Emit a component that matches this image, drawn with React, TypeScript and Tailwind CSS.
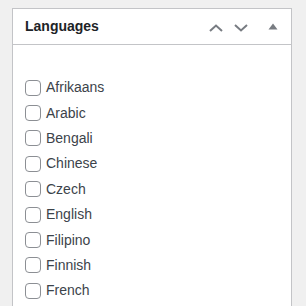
import React from 'react';

const languages = ['Afrikaans', 'Arabic', 'Bengali', 'Chinese', 'Czech', 'English', 'Filipino', 'Finnish', 'French'];

const App: React.FC = () => {
  return (
    <div className="h-[306px] overflow-hidden bg-[#f0f0f0] pt-2 pl-3 pr-[14px]" style={{ fontFamily: '"Liberation Sans", Arial, sans-serif' }}>
      <div className="border border-[#c3c4c7] bg-white h-[400px]">
        <div className="flex items-center h-9 border-b border-[#c3c4c7] pl-3 pr-3">
          <h2 className="text-[14px] font-bold text-[#1d2327] flex-1">Languages</h2>
          <svg width="14" height="8" viewBox="0 0 14 8" className="mt-[2px]">
            <path d="M1 7 L7 1.5 L13 7" fill="none" stroke="#787c82" strokeWidth="2" />
          </svg>
          <svg width="14" height="8" viewBox="0 0 14 8" className="ml-[11px] mt-[2px]">
            <path d="M1 1 L7 6.5 L13 1" fill="none" stroke="#787c82" strokeWidth="2" />
          </svg>
          <svg width="10" height="7" viewBox="0 0 10 7" className="ml-[20px] mr-[1px] -mt-[1px]">
            <path d="M0.5 6.5 L5 0.5 L9.5 6.5 Z" fill="#787c82" />
          </svg>
        </div>
        <ul className="pt-[30px] pl-3">
          {languages.map((lang) => (
            <li key={lang} className="flex items-center h-[25.4px]">
              <span className="w-4 h-4 border border-[#8c8f94] rounded-[4px] bg-white mr-[5px]" />
              <span className="text-[14px] text-[#3c434a]">{lang}</span>
            </li>
          ))}
        </ul>
      </div>
    </div>
  );
};

export default App;
